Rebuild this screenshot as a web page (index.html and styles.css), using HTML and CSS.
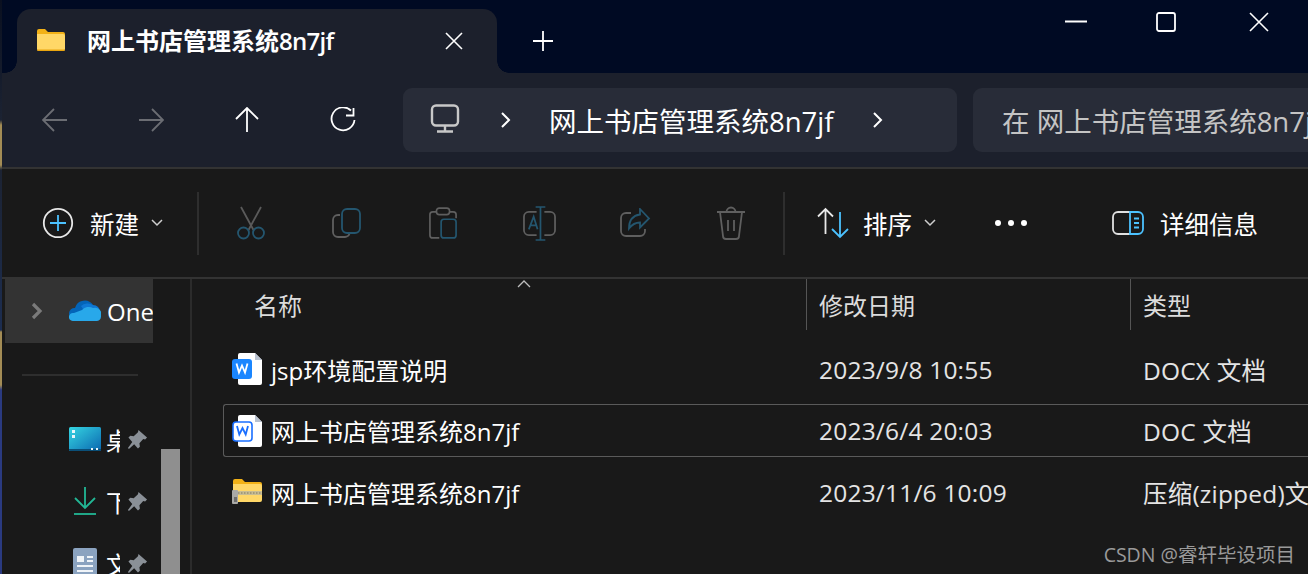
FILE: index.html
```html
<!DOCTYPE html>
<html lang="en">
<head>
    <meta charset="UTF-8">
    <meta name="viewport" content="width=device-width, initial-scale=1.0">
    <title>网上书店管理系统8n7jf</title>
    <link rel="stylesheet" href="styles.css">
</head>
<body>
    <div class="edge"></div>

    <!-- tabs -->
    <div class="titlebar">
        <div class="tab">
            <svg class="tab-folder" width="28" height="22" viewBox="0 0 28 22">
                <path d="M0 2a2 2 0 0 1 2-2h6l3 3h15a2 2 0 0 1 2 2v3H0z" fill="#f2b117"/>
                <path d="M0 5h26a2 2 0 0 1 2 2v13a2 2 0 0 1-2 2H2a2 2 0 0 1-2-2z" fill="#ffd767"/>
                <path d="M0 20.500h28v.2a1.500 1.500 0 0 1-1.500 1.300h-25A1.500 1.500 0 0 1 0 20.700z" fill="#e9a50f"/>
            </svg>
            <span class="tab-title">网上书店管理系统<span class="tab-latin">8n7jf</span></span>
            <svg class="tab-close" width="18" height="18" viewBox="0 0 18 18"><path d="M1 1l16 16M17 1L1 17" stroke="#fff" stroke-width="1.600"/></svg>
        </div>
        <svg class="tab-add" width="20" height="20" viewBox="0 0 20 20"><path d="M10 0v20M0 10h20" stroke="#fff" stroke-width="1.800"/></svg>
        <div class="controls">
            <svg class="ctl-min" width="22" height="20" viewBox="0 0 22 20"><path d="M0 9.500h22" stroke="#fff" stroke-width="2"/></svg>
            <svg class="ctl-max" width="20" height="20" viewBox="0 0 20 20"><rect x="1" y="1" width="18" height="18" rx="2" fill="none" stroke="#fff" stroke-width="1.800"/></svg>
            <svg width="20" height="20" viewBox="0 0 20 20"><path d="M1 1l18 18M19 1L1 19" stroke="#fff" stroke-width="1.600"/></svg>
        </div>
    </div>

    <!-- back / forward / address / search -->
    <div class="navbar">
        <div class="nav-btn">
            <svg width="26" height="26" viewBox="0 0 26 26"><path d="M25 13H1M12 2L1 13l11 11" fill="none" stroke="#6b6d73" stroke-width="1.800"/></svg>
        </div>
        <div class="nav-btn">
            <svg width="26" height="26" viewBox="0 0 26 26"><path d="M1 13h24M14 2l11 11-11 11" fill="none" stroke="#6b6d73" stroke-width="1.800"/></svg>
        </div>
        <div class="nav-btn">
            <svg width="26" height="26" viewBox="0 0 26 26"><path d="M13 25V1M2 12L13 1l11 11" fill="none" stroke="#fff" stroke-width="1.800"/></svg>
        </div>
        <div class="nav-btn">
            <svg width="26" height="26" viewBox="0 0 26 26"><path d="M21 3.500A11.500 11.500 0 1 0 24.500 13M23.500 1v7.500H16" fill="none" stroke="#fff" stroke-width="1.800"/></svg>
        </div>
        <div class="address">
            <svg class="pc" width="30" height="30" viewBox="0 0 30 30">
                <rect x="2" y="1.500" width="26" height="20" rx="4" fill="none" stroke="#c8c8c8" stroke-width="2.400"/>
                <path d="M15 22v5M7 27.500h16" fill="none" stroke="#c8c8c8" stroke-width="2.400"/>
            </svg>
            <svg class="crumb-arrow" width="11" height="16" viewBox="0 0 11 16"><path d="M2 1l7 7-7 7" fill="none" stroke="#fff" stroke-width="2"/></svg>
            <span class="crumb">网上书店管理系统8n7jf</span>
            <svg class="crumb-arrow" width="11" height="16" viewBox="0 0 11 16"><path d="M2 1l7 7-7 7" fill="none" stroke="#fff" stroke-width="2"/></svg>
        </div>
        <div class="search"><span>在 网上书店管理系统8n7jf 中搜索</span></div>
    </div>

    <!-- command bar -->
    <div class="toolbar">
        <div class="cmd cmd-new">
            <svg width="32" height="32" viewBox="0 0 32 32">
                <circle cx="16" cy="16" r="14.200" fill="none" stroke="#e8e8e8" stroke-width="1.800"/>
                <path d="M16 8v16M8 16h16" stroke="#4cc2ff" stroke-width="1.800"/>
            </svg>
            <span>新建</span>
            <svg class="caret" width="12" height="8" viewBox="0 0 12 8"><path d="M1 1l5 5 5-5" fill="none" stroke="#cfcfcf" stroke-width="1.500"/></svg>
        </div>
        <div class="sep"></div>
        <div class="tool">
            <svg width="30" height="34" viewBox="0 0 30 34">
                <path d="M5 1l12.500 23M25 1L12.500 24" fill="none" stroke="#5a5a5a" stroke-width="1.800"/>
                <circle cx="7.500" cy="27" r="5.500" fill="none" stroke="#24566f" stroke-width="1.800"/>
                <circle cx="22.500" cy="27" r="5.500" fill="none" stroke="#24566f" stroke-width="1.800"/>
            </svg>
        </div>
        <div class="tool">
            <svg width="30" height="30" viewBox="0 0 30 30">
                <path d="M8 7H6a5 5 0 0 0-5 5v12a5 5 0 0 0 5 5h7a5 5 0 0 0 4.500-3" fill="none" stroke="#5f5f5f" stroke-width="1.800"/>
                <rect x="10" y="1" width="18" height="24" rx="5" fill="none" stroke="#24566f" stroke-width="1.800"/>
            </svg>
        </div>
        <div class="tool">
            <svg width="28" height="34" viewBox="0 0 30 34">
                <path d="M8 5H4a3 3 0 0 0-3 3v22a3 3 0 0 0 3 3h7M22 5h4a3 3 0 0 1 3 3v4" fill="none" stroke="#5f5f5f" stroke-width="1.800"/>
                <rect x="8" y="1" width="14" height="7" rx="3" fill="none" stroke="#5f5f5f" stroke-width="1.800"/>
                <rect x="13" y="13" width="16" height="20" rx="3" fill="none" stroke="#24566f" stroke-width="1.800"/>
            </svg>
        </div>
        <div class="tool">
            <svg width="33" height="35" viewBox="0 0 34 36">
                <path d="M14 6H6a5 5 0 0 0-5 5v14a5 5 0 0 0 5 5h8M22 6h6a5 5 0 0 1 5 5v14a5 5 0 0 1-5 5h-6" fill="none" stroke="#5f5f5f" stroke-width="1.800"/>
                <path d="M18 1v34M13 1h10M13 35h10M6 24l5-13 4 13M7.500 20h6" fill="none" stroke="#24566f" stroke-width="1.800"/>
            </svg>
        </div>
        <div class="tool">
            <svg width="32" height="30" viewBox="0 0 32 30">
                <path d="M12 5H7a5 5 0 0 0-5 5v13a5 5 0 0 0 5 5h14a5 5 0 0 0 5-5v-2" fill="none" stroke="#5f5f5f" stroke-width="1.800"/>
                <path d="M21 1l9 9.500-9 9v-5c-5 0-8 2-11 6 0-8 4-13 11-14z" fill="none" stroke="#24566f" stroke-width="1.800"/>
            </svg>
        </div>
        <div class="tool">
            <svg width="30" height="34" viewBox="0 0 30 34">
                <path d="M1 6h28M4 6l3 24a3 3 0 0 0 3 3h10a3 3 0 0 0 3-3l3-24M10.500 6a4.500 4.500 0 0 1 9 0M12 14v11M18 14v11" fill="none" stroke="#5f5f5f" stroke-width="1.800"/>
            </svg>
        </div>
        <div class="sep sep-right"></div>
        <div class="cmd cmd-sort">
            <svg width="32" height="32" viewBox="0 0 32 32">
                <path d="M8.500 27V2M1 9.500l7.500-7.500L16 9.500" fill="none" stroke="#e8e8e8" stroke-width="1.800"/>
                <path d="M23 5v25M15 22l8 8 8-8" fill="none" stroke="#4cc2ff" stroke-width="1.800"/>
            </svg>
            <span>排序</span>
            <svg class="caret" width="12" height="8" viewBox="0 0 12 8"><path d="M1 1l5 5 5-5" fill="none" stroke="#cfcfcf" stroke-width="1.500"/></svg>
        </div>
        <div class="dots"><i></i><i></i><i></i></div>
        <div class="cmd cmd-details">
            <svg width="32" height="24" viewBox="0 0 32 24">
                <path d="M18 1H6a5 5 0 0 0-5 5v12a5 5 0 0 0 5 5h12" fill="none" stroke="#e0e0e0" stroke-width="1.800"/>
                <path d="M18 1h8a5 5 0 0 1 5 5v12a5 5 0 0 1-5 5h-8z" fill="none" stroke="#4cc2ff" stroke-width="1.800"/>
                <path d="M22 7.500h5M22 12h5M22 16.500h5" stroke="#4cc2ff" stroke-width="1.800"/>
            </svg>
            <span>详细信息</span>
        </div>
    </div>

    <!-- pin used in the sidebar -->
    <svg class="defs" width="0" height="0">
        <symbol id="pin" viewBox="0 0 22 22">
            <path d="M12 1l9 8-2 2-2-.5-4 4.500.5 3.500-2 2-4-4.500L2 21l-1-1 4.500-6.500L1.500 9l2-2 3.500.5 4.500-4z" fill="#8a9097"/>
        </symbol>
    </svg>

    <div class="main">
        <div class="sidebar">
            <div class="side-nav">
                <div class="drive">
                    <svg class="drive-arrow" width="12" height="18" viewBox="0 0 12 18"><path d="M2 2l7 7-7 7" fill="none" stroke="#7a7a7a" stroke-width="3.200"/></svg>
                    <svg class="cloud" width="32" height="22" viewBox="0 0 32 22">
                        <path d="M6 9a10 10 0 0 1 18-3l-5 14H5A5.500 5.500 0 0 1 6 9z" fill="#0364b8"/>
                        <path d="M12 7a10 10 0 0 1 12-1c4 0 7 3 7 7l-13 3z" fill="#0f78d4"/>
                        <path d="M13 11a9 9 0 0 1 11-2 6.500 6.500 0 0 1 8 8.500 4.500 4.500 0 0 1-4 4.500H4a4 4 0 0 1-4-5 4.500 4.500 0 0 1 5-3z" fill="#28a8ea"/>
                    </svg>
                    <span class="drive-name">OneDrive</span>
                </div>
                <div class="side-line"></div>
                <div class="quick">
                    <svg width="32" height="24" viewBox="0 0 32 24">
                        <defs><linearGradient id="desk" x1="0" y1="0" x2="1" y2="1"><stop offset="0" stop-color="#35d6e2"/><stop offset="1" stop-color="#0b67b0"/></linearGradient></defs>
                        <rect width="32" height="24" rx="1.500" fill="url(#desk)"/>
                        <path d="M0 22h32v.5a1.500 1.500 0 0 1-1.500 1.500h-29A1.500 1.500 0 0 1 0 22.500z" fill="#0a4f78"/>
                        <path d="M3 3h3v3H3zM3 8h3v3H3zM22 21h2v2h-2zM27 21h2v2h-2z" fill="#e8f6fa"/>
                    </svg>
                    <span class="quick-name">桌面</span>
                    <svg class="pin" width="21" height="21"><use href="#pin"/></svg>
                </div>
                <div class="quick">
                    <svg width="32" height="28" viewBox="0 0 32 28">
                        <path d="M16 0v21M6 11l10 10 10-10" fill="none" stroke="#22b795" stroke-width="1.800"/>
                        <path d="M5 27h22" stroke="#22b795" stroke-width="1.800"/>
                    </svg>
                    <span class="quick-name">下载</span>
                    <svg class="pin" width="21" height="21"><use href="#pin"/></svg>
                </div>
                <div class="quick">
                    <svg width="32" height="30" viewBox="0 0 32 30">
                        <path d="M4 2a2 2 0 0 1 2-2h20a2 2 0 0 1 2 2v28H4z" fill="#8ba3c0"/>
                        <path d="M8 8h7v6H8zM18 8h6v2h-6zM18 12h6v2h-6zM8 17h16v2H8zM8 22h16v2H8z" fill="#f0f4f8"/>
                    </svg>
                    <span class="quick-name">文档</span>
                    <svg class="pin" width="21" height="21"><use href="#pin"/></svg>
                </div>
            </div>
            <div class="scroll-track"><div class="scroll-thumb"></div></div>
        </div>

        <div class="files">
            <div class="file-head">
                <div class="head-cell head-name">名称
                    <svg class="sort-mark" width="14" height="8" viewBox="0 0 14 8"><path d="M1 7l6-6 6 6" fill="none" stroke="#bdbdbd" stroke-width="1.300"/></svg>
                </div>
                <div class="head-cell head-line">修改日期</div>
                <div class="head-cell head-line">类型</div>
            </div>
            <div class="file-list">
                <div class="file">
                    <div class="file-name">
                        <svg width="30" height="32" viewBox="0 0 30 32">
                            <path d="M6 2a2 2 0 0 1 2-2h15l7 7v23a2 2 0 0 1-2 2H8a2 2 0 0 1-2-2z" fill="#fff"/>
                            <path d="M23 0l7 7h-7z" fill="#b9c2d0"/>
                            <rect y="6" width="20" height="20" rx="3" fill="#1a86ff"/>
                            <path d="M4.500 10.500l2.500 9 3-7 3 7 2.500-9" fill="none" stroke="#fff" stroke-width="1.800"/>
                        </svg>
                        <span>jsp环境配置说明</span>
                    </div>
                    <div class="file-cell">2023/9/8 10:55</div>
                    <div class="file-cell">DOCX 文档</div>
                </div>
                <div class="file selected">
                    <div class="file-name">
                        <svg width="30" height="32" viewBox="0 0 30 32">
                            <path d="M6 2a2 2 0 0 1 2-2h15l7 7v23a2 2 0 0 1-2 2H8a2 2 0 0 1-2-2z" fill="#fff"/>
                            <path d="M23 0l7 7h-7z" fill="#b9c2d0"/>
                            <rect x="1" y="7" width="19" height="19" rx="3" fill="#fff" stroke="#1a6fff" stroke-width="1.600"/>
                            <path d="M5 11l2.300 8.500 3.200-6.500 3.200 6.500L16 11" fill="none" stroke="#1a6fff" stroke-width="1.800"/>
                        </svg>
                        <span>网上书店管理系统8n7jf</span>
                    </div>
                    <div class="file-cell">2023/6/4 20:03</div>
                    <div class="file-cell">DOC 文档</div>
                </div>
                <div class="file">
                    <div class="file-name">
                        <svg width="30" height="26" viewBox="0 0 30 26">
                            <path d="M1 2a2 2 0 0 1 2-2h7l3 3h15a2 2 0 0 1 2 2v4H1z" fill="#f2b117"/>
                            <path d="M1 5h27a2 2 0 0 1 2 2v14a2 2 0 0 1-2 2H3a2 2 0 0 1-2-2z" fill="#ffd767"/>
                            <path d="M5 12h25v4H5z" fill="#c9bd92"/>
                            <path d="M6 14h24" stroke="#7d7767" stroke-width="1.200" stroke-dasharray="1.500 1.500"/>
                            <rect y="11" width="6" height="14" rx="1" fill="#a9a9a6"/>
                            <rect x="2" y="18" width="3" height="5" fill="#6d6d6d"/>
                        </svg>
                        <span>网上书店管理系统8n7jf</span>
                    </div>
                    <div class="file-cell">2023/11/6 10:09</div>
                    <div class="file-cell">压缩(zipped)文件夹</div>
                </div>
            </div>
        </div>
    </div>

    <div class="watermark">CSDN @睿轩毕设项目</div>
</body>
</html>
```

FILE: styles.css
```css
* {
    box-sizing: border-box;
}
html, body {
    height: 100%;
}
body {
    margin: 0;
    height: 574px;
    overflow: hidden;
    position: relative;
    background: #191919;
    color: #fff;
    font-family: "Open Sans", "Noto Sans CJK SC", sans-serif;
}
svg {
    display: block;
    flex: none;
}
.defs {
    position: absolute;
}
.edge {
    position: absolute;
    left: 0;
    top: 0;
    width: 2px;
    height: 574px;
    background: linear-gradient(#0a1020 0, #1c2333 120px, #a38c55 125px, #a38c55 165px, #1c2333 170px, #1c2d50 330px, #a38c55 332px, #a38c55 385px, #2a3a80 390px, #2a3a80 574px);
}

/* tabs */
.titlebar {
    height: 73px;
    background: #000a23;
    display: flex;
    align-items: flex-end;
    padding-left: 17px;
}
.tab {
    width: 480px;
    height: 64px;
    background: #1c202c;
    border-radius: 14px 14px 0 0;
    display: flex;
    align-items: center;
    padding: 0 34px 0 20px;
    position: relative;
}
.tab::before, .tab::after {
    content: "";
    position: absolute;
    bottom: 0;
    width: 12px;
    height: 12px;
}
.tab::before {
    left: -12px;
    background: radial-gradient(circle at 0 0, transparent 11.500px, #1c202c 12px);
}
.tab::after {
    right: -12px;
    background: radial-gradient(circle at 100% 0, transparent 11.500px, #1c202c 12px);
}
.tab-folder {
    margin-top: -2px;
}
.tab-title {
    margin-left: 22px;
    font-size: 24px;
    font-weight: 700;
    line-height: 30px;
    flex: 1;
    white-space: nowrap;
}
.tab-latin {
    font-weight: 600;
    letter-spacing: -0.7px;
}
.tab-close {
    margin-top: -1px;
}
.tab-add {
    margin: 0 0 22px 36px;
}
.controls {
    margin-left: auto;
    align-self: flex-start;
    display: flex;
    padding: 12px 39px 0 0;
}
.ctl-max {
    margin: 0 73px 0 69px;
}

/* nav */
.navbar {
    height: 96px;
    background: #1c202c;
    border-bottom: 2px solid #333;
    display: flex;
    align-items: flex-start;
    padding: 15px 0 0 7px;
}
.nav-btn {
    width: 96px;
    height: 64px;
    display: flex;
    align-items: center;
    justify-content: center;
}
.address {
    width: 554px;
    height: 64px;
    margin-left: 12px;
    background: #282c38;
    border-radius: 9px;
    display: flex;
    align-items: center;
    padding-left: 27px;
}
.pc {
    margin-top: -3px;
}
.crumb-arrow {
    margin-left: 40px;
}
.crumb {
    margin-left: 38px;
    font-size: 27.500px;
    white-space: nowrap;
}
.address .crumb + .crumb-arrow {
    margin-left: 38px;
}
.search {
    flex: 1;
    min-width: 0;
    height: 64px;
    margin-left: 16px;
    background: #282c38;
    border-radius: 9px 0 0 9px;
    display: flex;
    align-items: center;
    padding-left: 29px;
    color: #c4c4c4;
    font-size: 27.500px;
    white-space: nowrap;
    overflow: hidden;
}

/* command bar */
.toolbar {
    height: 110px;
    border-bottom: 2px solid #333;
    background: #191919;
    display: flex;
    align-items: center;
    padding-left: 42px;
    font-size: 24.500px;
}
.cmd {
    display: flex;
    align-items: center;
}
.cmd-new {
    width: 155px;
}
.cmd-new span {
    margin-left: 16px;
}
.caret {
    margin-left: 12px;
}
.sep {
    width: 2px;
    height: 63px;
    background: #2e2e2e;
}
.tool {
    width: 96px;
    display: flex;
    justify-content: center;
}
.sep + .tool {
    margin-left: 4px;
}
.sep-right {
    margin-left: 4px;
}
.cmd-sort {
    margin-left: 32px;
}
.cmd-sort span {
    margin-left: 14px;
}
.dots {
    display: flex;
    gap: 7px;
    margin-left: 59px;
}
.dots i {
    width: 6px;
    height: 6px;
    border-radius: 50%;
    background: #fff;
}
.cmd-details {
    margin-left: 85px;
}
.cmd-details span {
    margin-left: 16px;
    white-space: nowrap;
}

/* sidebar */
.main {
    display: flex;
    height: 295px;
}
.sidebar {
    width: 192px;
    display: flex;
    border-right: 2px solid #2b2b2b;
    padding-left: 5px;
}
.side-nav {
    width: 148px;
    overflow: hidden;
}
.drive {
    height: 64px;
    background: #333;
    display: flex;
    align-items: center;
    padding-left: 26px;
    font-size: 24px;
    white-space: nowrap;
}
.drive-name {
    margin-left: 5px;
}
.drive-arrow {
    margin-right: 26px;
}
.cloud {
    margin: -2px 1px 0 0;
}
.side-line {
    width: 116px;
    height: 2px;
    background: #2e2e2e;
    margin: 31px 0 0 17px;
}
.quick {
    height: 62px;
    display: flex;
    align-items: center;
    padding-left: 64px;
    font-size: 24px;
}
.quick:nth-child(3) {
    margin-top: 32px;
}
.quick-name {
    width: 14px;
    margin: 0 7px 0 5px;
    overflow: hidden;
    white-space: nowrap;
}
.scroll-track {
    width: 19px;
    margin-left: 8px;
    padding-top: 170px;
}
.scroll-thumb {
    height: 125px;
    background: #8f8f8f;
}

/* file list */
.files {
    flex: 1;
    min-width: 0;
    overflow: hidden;
    padding-left: 31px;
}
.file-head, .file {
    display: grid;
    grid-template-columns: 583px 324px 1fr;
    align-items: center;
}
.file-head {
    height: 51px;
    color: #dcdcdc;
    font-size: 24px;
}
.head-cell {
    height: 51px;
    display: flex;
    align-items: center;
}
.head-name {
    padding-left: 31px;
    position: relative;
}
.sort-mark {
    position: absolute;
    left: 294px;
    top: 1px;
}
.head-line {
    border-left: 1px solid #555;
    padding-left: 12px;
}
.file-list {
    display: flex;
    flex-direction: column;
    gap: 8.500px;
    padding-top: 12.500px;
}
.file {
    height: 53px;
    border: 1px solid transparent;
    border-right: 0;
    border-radius: 3px 0 0 3px;
    font-size: 24px;
    color: #fff;
    white-space: nowrap;
}
.file.selected {
    border-color: #5a5a5a;
}
.file-name {
    display: flex;
    align-items: center;
    padding-left: 8px;
    gap: 9px;
}
.file-cell {
    padding-left: 12px;
    color: #e4e4e4;
    font-size: 24.500px;
    letter-spacing: 0.2px;
    overflow: hidden;
}
.watermark {
    position: absolute;
    right: 13px;
    bottom: 6px;
    font-size: 19.500px;
    color: #9a9a9a;
    white-space: nowrap;
}
```
